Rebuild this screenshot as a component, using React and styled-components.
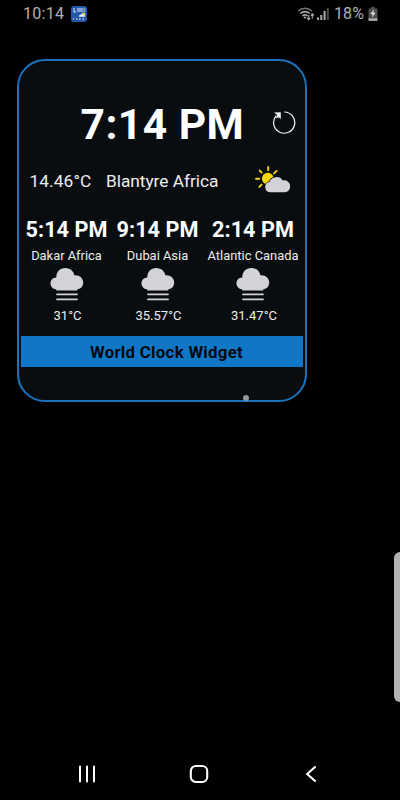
import React from 'react';
import styled, { createGlobalStyle } from 'styled-components';

const Global = createGlobalStyle`
  *{box-sizing:border-box}
  body{margin:0;background:#000;font-family:Roboto,"Liberation Sans",sans-serif;overflow:hidden}
  svg{display:block;flex:none}
`;
const Screen = styled.main`
  width:400px;height:800px;background:#000;display:flex;flex-direction:column;
  position:relative;overflow:hidden;
`;
const StatusBar = styled.header`
  height:28px;padding:0 22px 0 23px;display:flex;align-items:center;color:#b0b0b0;
  font-size:16px;line-height:28px;
`;
const StatusTime = styled.span`width:48px;letter-spacing:.3px;`;
const StatusIcons = styled.div`margin-left:auto;display:flex;align-items:center;`;
const Battery = styled.span`margin:0 2px 0 5px;width:32px;white-space:nowrap;letter-spacing:.1px;`;
const Card = styled.section`
  width:290px;height:343px;margin:31px 0 0 17px;border:2px solid #1b73bd;border-radius:28px;
  background:#090d10;color:#fff;padding:0 2px;display:flex;flex-direction:column;position:relative;
`;
const MainRow = styled.div`
  height:62px;margin-top:33px;display:flex;align-items:center;padding:0 7px 0 59.5px;justify-content:space-between;
`;
const MainTime = styled.h1`
  margin:0;font-size:42.5px;line-height:62px;font-weight:700;white-space:nowrap;letter-spacing:.5px;
`;
const RefreshButton = styled.button`
  border:0;background:none;padding:0;width:24px;height:26px;margin-top:-7px;
`;
const LocalRow = styled.div`
  height:50px;display:flex;align-items:center;padding:0 13px 0 8.5px;font-size:17.3px;color:#eee;white-space:nowrap;
`;
const LocalTemp = styled.span`width:76.5px;letter-spacing:.1px;`;
const LocalPlace = styled.span`flex:1;letter-spacing:-.02px;`;
const WeatherSlot = styled.div`margin-top:-3px;`;
const Clocks = styled.div`display:grid;grid-template-columns:91px 91px 100px;height:130px;`;
const Clock = styled.article`display:flex;flex-direction:column;align-items:center;white-space:nowrap;`;
const ClockTime = styled.strong`font-size:21.7px;line-height:26px;margin-top:11px;`;
const City = styled.span`font-size:12.9px;line-height:16px;margin:5px 0 3px;color:#eee;`;
const Temp = styled.span`font-size:13px;line-height:16px;margin-top:7px;padding-left:2px;color:#eee;`;
const Title = styled.h2`
  margin:0;height:31px;background:#1077c6;color:#05090d;font-size:16.8px;line-height:33px;
  font-weight:700;text-align:center;padding-left:9px;letter-spacing:.3px;
`;
const TouchDot = styled.i`
  position:absolute;left:224px;top:334px;width:6px;height:6px;border-radius:50%;background:#96969a;
`;
const EdgeHandle = styled.div`
  position:absolute;left:394px;top:552px;width:12px;height:150px;border-radius:6px;background:#b3b3b3;
`;
const NavBar = styled.nav`
  margin-top:auto;height:52px;padding:0 83px 0 78px;display:grid;grid-template-columns:111px 1fr auto;align-items:center;
`;

const AppIcon = () => (
  <svg width="16" height="16" viewBox="0 0 16 16">
    <rect width="16" height="16" rx="3" fill="#2359a8" />
    <path d="M3 2v4h2M7 2v4M9 2v4M11 2v4M12.500 3h2M12.500 5h2" stroke="#d5dfec" strokeWidth="1.100" fill="none" />
    <circle cx="12.500" cy="8.300" r="1.900" fill="#d8cd69" />
    <path d="M8 10.500q0-2 2-2 2-1 3 1h1v1.300H8z" fill="#e7edf2" />
    <path d="M2 13h1M5 13h1.500M8 13h1.500M11.500 13H13" stroke="#bac9da" strokeWidth="1.500" />
  </svg>
);
const WifiIcon = () => (
  <svg width="20" height="16" viewBox="0 0 20 16" fill="none" stroke="#a8a8a8">
    <path d="M1 5Q8 -.5 15 5" stroke="#777" strokeWidth="1.500" />
    <path d="M3.300 7.500Q8 3.700 12.700 7.500M5.500 9.800Q8 8 10.500 9.800" strokeWidth="1.600" />
    <path d="M8 13L6.300 11Q8 10 9.500 11z" fill="#a8a8a8" stroke="none" />
    <path d="M11.700 9v4.500M10.200 12l1.500 1.700 1.500-1.700M15.300 12.500V8M13.800 9.500l1.500-1.700 1.500 1.700" strokeWidth="1.200" />
  </svg>
);
const SignalIcon = () => (
  <svg width="12" height="14" viewBox="0 0 12 14">
    <path d="M0 10.500h2V13H0zM3.300 8h2v5h-2zM6.600 4h2v9h-2z" fill="#aaa" />
    <path d="M9.800 1h2v12h-2z" fill="#4b4b4b" />
  </svg>
);
const BatteryIcon = () => (
  <svg width="10" height="14" viewBox="0 0 10 14">
    <path d="M3 0h4v1.500h2Q9.500 1.500 9.500 2v11q0 .7-.7.700H1.200Q.5 13.700.5 13V2Q.5 1.500 1 1.500h2z" fill="#505050" />
    <path d="M.5 11.400h9V13q0 .7-.7.700H1.200Q.5 13.700.5 13z" fill="#b5b5b5" />
    <path d="M6 2.500L2.200 7h2.200L4 10.300 7.800 5.700H5.500z" fill="#ddd" />
  </svg>
);
const RefreshIcon = () => (
  <svg width="24" height="26" viewBox="0 0 24 26">
    <path d="M12.300 3A10.600 10.600 0 1 1 4.300 6.500" fill="none" stroke="#f3f3f3" strokeWidth="1.200" />
    <path d="M2 3.600L8.800 3.300V10L6.500 8.300 4 9.500 5.300 6z" fill="#f3f3f3" />
  </svg>
);
const SunCloudIcon = () => (
  <svg width="35" height="28" viewBox="0 0 35 28">
    <g stroke="#f4d41a" strokeWidth="1.900" strokeLinecap="round">
      <path d="M13.200 1v3M4.700 4.500l2 2.100M1 12.700h3.200M4.300 20.900l2.300-2.300M21.700 4.900l-2.700 2.500" />
    </g>
    <circle cx="12.800" cy="12.600" r="5.900" fill="#f6d609" />
    <path d="M15.400 26.300a5.200 5.200 0 0 1-1-10.300A7.600 7.600 0 0 1 27.800 14.500A6 6 0 1 1 28.600 26.300z" fill="#d2d2d8" stroke="#090d10" strokeWidth="1.500" paintOrder="stroke" />
  </svg>
);
const FogIcon = () => (
  <svg width="34" height="34" viewBox="0 0 34 34">
    <path d="M7 22.300C3.300 22.300.5 19.600.5 16.400C.5 13.200 2.700 10.900 6.300 10.600C6.300 4.700 10 1 15.200 1C20.500 1 24 4.700 24.300 8.200C29.200 7.600 33.200 10.900 33.200 15.400C33.200 19.300 30.400 22.300 26.500 22.300z" fill="#d2d2d8" />
    <path d="M7 22.700h19.500M7 27.300h20M7 32.300h20" stroke="#d2d2d6" strokeWidth="1.800" strokeLinecap="round" />
  </svg>
);
const RecentIcon = () => (
  <svg width="18" height="18" viewBox="0 0 18 18"><path d="M2 1.500v15M9 1.500v15M16 1.500v15" stroke="#fff" strokeWidth="2" strokeLinecap="round" /></svg>
);
const HomeIcon = () => (
  <svg width="20" height="20" viewBox="0 0 20 20"><rect x="1.800" y="2" width="16.400" height="16" rx="5" fill="none" stroke="#fff" strokeWidth="2.100" /></svg>
);
const BackIcon = () => (
  <svg width="12" height="18" viewBox="0 0 12 18"><path d="M10 2L2.200 9l7.800 7" fill="none" stroke="#fff" strokeWidth="2.100" strokeLinecap="round" /></svg>
);

const clocks = [
  { time: '5:14 PM', city: 'Dakar Africa', temp: '31°C' },
  { time: '9:14 PM', city: 'Dubai Asia', temp: '35.57°C' },
  { time: '2:14 PM', city: 'Atlantic Canada', temp: '31.47°C' },
];

export default function App() {
  return (
    <Screen>
      <Global />
      <StatusBar>
        <StatusTime>10:14</StatusTime><AppIcon />
        <StatusIcons><WifiIcon /><SignalIcon /><Battery>18%</Battery><BatteryIcon /></StatusIcons>
      </StatusBar>
      <Card>
        <MainRow>
          <MainTime>7:14 PM</MainTime>
          <RefreshButton aria-label="Refresh"><RefreshIcon /></RefreshButton>
        </MainRow>
        <LocalRow>
          <LocalTemp>14.46°C</LocalTemp><LocalPlace>Blantyre Africa</LocalPlace>
          <WeatherSlot><SunCloudIcon /></WeatherSlot>
        </LocalRow>
        <Clocks>
          {clocks.map(({ time, city, temp }) => (
            <Clock key={city}>
              <ClockTime>{time}</ClockTime><City>{city}</City><FogIcon /><Temp>{temp}</Temp>
            </Clock>
          ))}
        </Clocks>
        <Title>World Clock Widget</Title>
        <TouchDot />
      </Card>
      <EdgeHandle />
      <NavBar><RecentIcon /><HomeIcon /><BackIcon /></NavBar>
    </Screen>
  );
}
